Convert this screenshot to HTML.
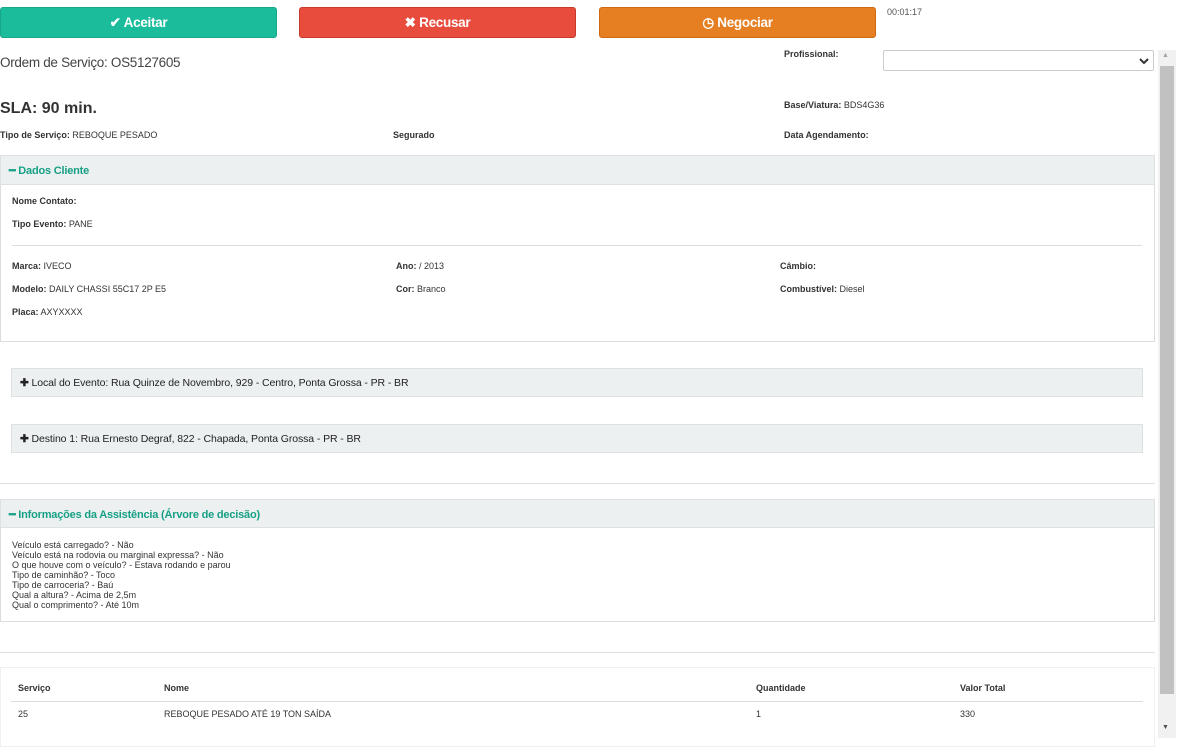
<!DOCTYPE html>
<html><head><meta charset="utf-8"><style>
*{margin:0;padding:0;box-sizing:border-box}
body{width:1178px;height:742px;overflow:hidden;background:#fff;font-family:"Liberation Sans",Arial,sans-serif;color:#333;position:relative}
.a{position:absolute;white-space:nowrap}
.btn{position:absolute;top:7px;height:31px;border-radius:3px;color:#fff;font-weight:bold;font-size:13.5px;text-align:center;line-height:30px;letter-spacing:-0.3px}
.s{font-size:9px}
.b{font-weight:bold}
.hd{position:absolute;background:#ecf0f1;border:1px solid #dde1e2}
.box{position:absolute;border:1px solid #ddd}
.hl{position:absolute;height:1px;background:#ddd}
.g{color:#16a085;font-weight:bold;font-size:11px;letter-spacing:-0.2px}
</style></head><body>
<div class="btn" style="left:0;width:277px;background:#1abc9c;border:1px solid #17a689">&#10004; Aceitar</div>
<div class="btn" style="left:299px;width:277px;background:#e74c3c;border:1px solid #c9392b">&#10006; Recusar</div>
<div class="btn" style="left:599px;width:277px;background:#e67e22;border:1px solid #cf6a12">&#9719; Negociar</div>
<div class="a s" style="left:887px;top:7px;color:#555">00:01:17</div>
<div class="a" style="left:0;top:55px;font-size:13.5px;color:#444;letter-spacing:-0.3px">Ordem de Serviço: OS5127605</div>
<div class="a s b" style="left:784px;top:49px">Profissional:</div>
<div style="position:absolute;left:883px;top:50px;width:271px;height:21px;border:1px solid #ccc;border-radius:2px"><svg style="position:absolute;right:4px;top:6px" width="10" height="8" viewBox="0 0 10 8"><path d="M1 2 L5 6 L9 2" fill="none" stroke="#333" stroke-width="2"/></svg></div>
<div class="a b" style="left:0;top:100px;font-size:16px;color:#333">SLA: 90 min.</div>
<div class="a s" style="left:784px;top:100px"><b>Base/Viatura:</b> BDS4G36</div>
<div class="a s" style="left:0;top:130px"><b>Tipo de Serviço:</b> REBOQUE PESADO</div>
<div class="a s b" style="left:393px;top:130px">Segurado</div>
<div class="a s b" style="left:784px;top:130px">Data Agendamento:</div>

<div class="box" style="left:0;top:155px;width:1155px;height:187px"></div>
<div class="hd" style="left:0;top:155px;width:1155px;height:30px"><span class="a g" style="left:8px;top:8px">&#9473; Dados Cliente</span></div>
<div class="a s b" style="left:12px;top:196px">Nome Contato:</div>
<div class="a s" style="left:12px;top:219px"><b>Tipo Evento:</b> PANE</div>
<div class="hl" style="left:12px;top:245px;width:1130px"></div>
<div class="a s" style="left:12px;top:261px"><b>Marca:</b> IVECO</div>
<div class="a s" style="left:396px;top:261px"><b>Ano:</b> / 2013</div>
<div class="a s b" style="left:780px;top:261px">Câmbio:</div>
<div class="a s" style="left:12px;top:284px"><b>Modelo:</b> DAILY CHASSI 55C17 2P E5</div>
<div class="a s" style="left:396px;top:284px"><b>Cor:</b> Branco</div>
<div class="a s" style="left:780px;top:284px"><b>Combustível:</b> Diesel</div>
<div class="a s" style="left:12px;top:307px"><b>Placa:</b> AXYXXXX</div>

<div class="hd" style="left:11px;top:368px;width:1132px;height:29px"><span class="a" style="left:8px;top:8px;font-size:10.5px;color:#222;letter-spacing:-0.1px"><b>&#10010;</b> Local do Evento: Rua Quinze de Novembro, 929 - Centro, Ponta Grossa - PR - BR</span></div>
<div class="hd" style="left:11px;top:424px;width:1132px;height:29px"><span class="a" style="left:8px;top:8px;font-size:10.5px;color:#222;letter-spacing:-0.1px"><b>&#10010;</b> Destino 1: Rua Ernesto Degraf, 822 - Chapada, Ponta Grossa - PR - BR</span></div>
<div class="hl" style="left:0;top:483px;width:1155px"></div>

<div class="box" style="left:0;top:499px;width:1155px;height:123px"></div>
<div class="hd" style="left:0;top:499px;width:1155px;height:29px"><span class="a g" style="left:8px;top:8px">&#9473; Informações da Assistência (Árvore de decisão)</span></div>
<div class="a s" style="left:12px;top:540px;line-height:10px;color:#333">Veículo está carregado? - Não<br>Veículo está na rodovia ou marginal expressa? - Não<br>O que houve com o veículo? - Estava rodando e parou<br>Tipo de caminhão? - Toco<br>Tipo de carroceria? - Baú<br>Qual a altura? - Acima de 2,5m<br>Qual o comprimento? - Até 10m</div>
<div class="hl" style="left:0;top:652px;width:1155px"></div>
<div class="box" style="left:0;top:667px;width:1155px;height:80px;border-color:#f0f0f0"></div>
<div class="a s b" style="left:18px;top:683px">Serviço</div>
<div class="a s b" style="left:164px;top:683px">Nome</div>
<div class="a s b" style="left:756px;top:683px">Quantidade</div>
<div class="a s b" style="left:960px;top:683px">Valor Total</div>
<div class="hl" style="left:11px;top:701px;width:1132px"></div>
<div class="a s" style="left:18px;top:709px">25</div>
<div class="a s" style="left:164px;top:709px">REBOQUE PESADO ATÉ 19 TON SAÍDA</div>
<div class="a s" style="left:756px;top:709px">1</div>
<div class="a s" style="left:960px;top:709px">330</div>

<div style="position:absolute;left:1158px;top:50px;width:18px;height:688px;background:#f1f1f1"></div>
<div style="position:absolute;left:1160px;top:66px;width:14px;height:628px;background:#c1c1c1"></div>
<div class="a" style="left:1162px;top:52px;font-size:7px;color:#a3a3a3">&#9650;</div>
<div class="a" style="left:1162px;top:724px;font-size:7px;color:#505050">&#9660;</div>
</body></html>
